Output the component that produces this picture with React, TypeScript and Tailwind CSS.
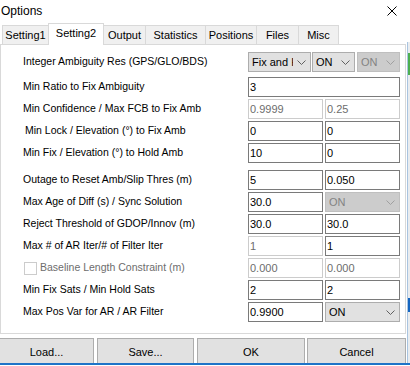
const Chevron = ({ color }: { color: string }) => (
  <svg width="9" height="5" viewBox="0 0 9 5">
    <polyline points="0.5,0.5 4.5,4.5 8.5,0.5" fill="none" stroke={color} strokeWidth="1" />
  </svg>
);

interface FieldProps {
  value: string;
  w: string;
  disabled?: boolean;
}

const Field = ({ value, w, disabled }: FieldProps) => (
  <div
    className={`flex h-[20px] items-center border bg-white pl-[1px] text-[11px] ${w} ${
      disabled ? "border-[#cccccc] text-[#6d6d6d]" : "border-[#7a7a7a] text-black"
    }`}
  >
    {value}
  </div>
);

interface ComboProps {
  text: string;
  w: string;
  disabled?: boolean;
  textW?: string;
}

const Combo = ({ text, w, disabled, textW = "" }: ComboProps) => (
  <div
    className={`flex h-[20px] items-center justify-between border pl-[3px] pr-[4px] text-[11px] ${w} ${
      disabled ? "border-[#bfbfbf] bg-[#cccccc] text-[#838383]" : "border-[#adadad] bg-[#e1e1e1] text-black"
    }`}
  >
    <span className={`overflow-hidden whitespace-nowrap ${textW}`}>{text}</span>
    <Chevron color={disabled ? "#a0a0a0" : "#606060"} />
  </div>
);

const Label = ({ children, indent }: { children: React.ReactNode; indent?: boolean }) => (
  <div className={`w-[225px] whitespace-nowrap text-[10.5px] ${indent ? "pl-[2px]" : ""}`}>{children}</div>
);

const tabs = [
  { name: "Setting1", w: "w-[47px]" },
  { name: "Setting2", w: "w-[56px]", active: true },
  { name: "Output", w: "w-[43px]" },
  { name: "Statistics", w: "w-[61px]" },
  { name: "Positions", w: "w-[52px]" },
  { name: "Files", w: "w-[43px]" },
  { name: "Misc", w: "w-[41px]" },
];

export default function App() {
  return (
    <div className="flex h-[366px] w-[410px] flex-col overflow-hidden bg-white font-['Liberation_Sans',Arial,sans-serif] text-black">
      <div className="flex h-[363px]">
        <div className="flex w-[407px] flex-col">
          {/* title bar */}
          <div className="flex h-[23px] items-start justify-between">
            <span className="block pl-[1px] pt-[4px] text-[12px] leading-[14px]">Options</span>
            <svg className="mr-[10px] mt-[6px]" width="10" height="10" viewBox="0 0 10 10">
              <path d="M0.5 0.5 L9.5 9.5 M9.5 0.5 L0.5 9.5" stroke="#000" strokeWidth="1" />
            </svg>
          </div>

          {/* tabs */}
          <div className="flex h-[21px] items-end pl-[2px]">
            {tabs.map((t, i) =>
              t.active ? (
                <div
                  key={t.name}
                  className={`relative z-10 -mb-px flex h-[22px] items-center justify-center border-x border-t border-[#d9d9d9] bg-white pb-[3px] text-[11px] ${t.w} ${
                    i > 0 ? "-ml-px" : ""
                  }`}
                >
                  {t.name}
                </div>
              ) : (
                <div
                  key={t.name}
                  className={`flex h-[19px] items-center justify-center border-x border-t border-[#d9d9d9] bg-[#f0f0f0] text-[11px] ${t.w} ${
                    i > 0 ? "-ml-px" : ""
                  }`}
                >
                  {t.name}
                </div>
              )
            )}
          </div>

          {/* panel */}
          <div className="flex h-[290px] w-[406px] flex-col border border-[#d9d9d9] pl-[22px] pt-[7px]">
            <div className="flex h-[20px] items-center">
              <Label>Integer Ambiguity Res (GPS/GLO/BDS)</Label>
              <Combo text="Fix and Hold" w="w-[63px]" textW="w-[41px]" />
              <Combo text="ON" w="ml-[1px] w-[43px]" />
              <Combo text="ON" w="ml-[2px] w-[43px]" disabled />
            </div>
            <div className="mt-[5px] flex h-[20px] items-center">
              <Label>Min Ratio to Fix Ambiguity</Label>
              <Field value="3" w="w-[152px]" />
            </div>
            <div className="mt-[2px] flex h-[20px] items-center">
              <Label>Min Confidence / Max FCB to Fix Amb</Label>
              <Field value="0.9999" w="w-[75px]" disabled />
              <Field value="0.25" w="ml-[2px] w-[75px]" disabled />
            </div>
            <div className="mt-[2px] flex h-[20px] items-center">
              <Label indent>Min Lock / Elevation (°) to Fix Amb</Label>
              <Field value="0" w="w-[75px]" />
              <Field value="0" w="ml-[2px] w-[75px]" />
            </div>
            <div className="mt-[2px] flex h-[20px] items-center">
              <Label>Min Fix / Elevation (°) to Hold Amb</Label>
              <Field value="10" w="w-[75px]" />
              <Field value="0" w="ml-[2px] w-[75px]" />
            </div>

            <div className="mt-[7px] flex h-[20px] items-center">
              <Label>Outage to Reset Amb/Slip Thres (m)</Label>
              <Field value="5" w="w-[75px]" />
              <Field value="0.050" w="ml-[2px] w-[75px]" />
            </div>
            <div className="mt-[2px] flex h-[20px] items-center">
              <Label>Max Age of Diff (s) / Sync Solution</Label>
              <Field value="30.0" w="w-[75px]" />
              <Combo text="ON" w="ml-[2px] w-[75px]" disabled />
            </div>
            <div className="mt-[2px] flex h-[20px] items-center">
              <Label>Reject Threshold of GDOP/Innov (m)</Label>
              <Field value="30.0" w="w-[75px]" />
              <Field value="30.0" w="ml-[2px] w-[75px]" />
            </div>
            <div className="mt-[2px] flex h-[20px] items-center">
              <Label>Max # of AR Iter/# of Filter Iter</Label>
              <Field value="1" w="w-[75px]" disabled />
              <Field value="1" w="ml-[2px] w-[75px]" />
            </div>
            <div className="mt-[2px] flex h-[20px] items-center">
              <div className="flex w-[225px] items-center pl-[1px]">
                <div className="h-[13px] w-[13px] border border-[#cccccc] bg-white" />
                <span className="ml-[3px] whitespace-nowrap text-[10.5px] text-[#6d6d6d]">
                  Baseline Length Constraint (m)
                </span>
              </div>
              <Field value="0.000" w="w-[75px]" disabled />
              <Field value="0.000" w="ml-[2px] w-[75px]" disabled />
            </div>
            <div className="mt-[2px] flex h-[20px] items-center">
              <Label>Min Fix Sats / Min Hold Sats</Label>
              <Field value="2" w="w-[75px]" />
              <Field value="2" w="ml-[2px] w-[75px]" />
            </div>
            <div className="mt-[2px] flex h-[20px] items-center">
              <Label>Max Pos Var for AR / AR Filter</Label>
              <Field value="0.9900" w="w-[75px]" />
              <Combo text="ON" w="ml-[2px] w-[75px]" />
            </div>
          </div>

          {/* buttons */}
          <div className="mt-[4px] flex h-[25px] items-start overflow-hidden text-[11px]">
            <button className="-ml-px h-[28px] w-[95px] shrink-0 border border-[#adadad] bg-[#e1e1e1]">Load...</button>
            <button className="ml-[3px] h-[28px] w-[97px] shrink-0 border border-[#adadad] bg-[#e1e1e1]">Save...</button>
            <button className="ml-[3px] h-[28px] w-[108px] shrink-0 border border-[#adadad] bg-[#e1e1e1]">OK</button>
            <button className="ml-[2px] h-[28px] w-[99px] shrink-0 border border-[#adadad] bg-[#e1e1e1]">Cancel</button>
          </div>
        </div>

        {/* window behind, right edge */}
        <div className="flex w-[3px] flex-col">
          <div className="h-[42px] bg-white" />
          <div className="flex flex-1 flex-col border-l border-[#a9c4e0] bg-[#e9ecef]">
            <div className="h-[11px]" />
            <div className="h-[22px] bg-[#4caf50]" />
            <div className="h-[223px]" />
            <div className="h-[14px] bg-[#1565c0]" />
          </div>
        </div>
      </div>
      <div className="h-[2px] bg-[#1e74c8]" />
    </div>
  );
}
